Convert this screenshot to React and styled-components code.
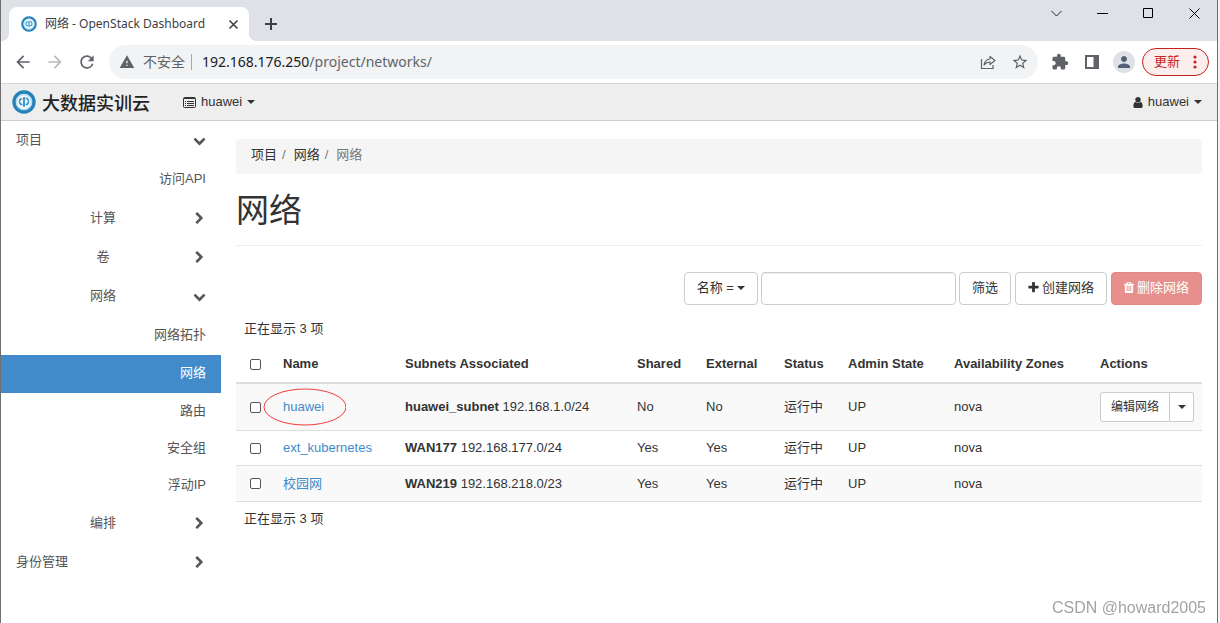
import React from 'react'
import styled, { createGlobalStyle, css } from 'styled-components';
import {
  MdArrowBack,
  MdArrowForward,
  MdRefresh,
  MdWarning,
  MdStarBorder,
  MdExtension,
  MdPerson,
} from 'react-icons/md';

const GlobalStyle = createGlobalStyle`
  *, *::before, *::after {
    box-sizing: border-box;
  }
  body {
    margin: 0;
    background: #f3f3f3;
    color: #333;
    font-family: "Liberation Sans", "Noto Sans CJK SC", sans-serif;
    font-size: 13px;
    line-height: 18px;
  }
  button, input {
    font: inherit;
    color: inherit;
  }
  button {
    cursor: pointer;
  }
  a {
    text-decoration: none;
    color: inherit;
  }
  ul, ol {
    list-style: none;
    margin: 0;
    padding: 0;
  }
  svg {
    display: block;
    flex: none;
  }
`

const Window = styled.div`
  display: flex;
  flex-direction: column;
  min-height: 100vh;
  margin-right: 2px;
  background: #fff;
  border-left: 1px solid #6f6f6f;
  border-right: 1px solid #6f6f6f;
`

/* browser frame */

const TabStrip = styled.div`
  display: flex;
  justify-content: space-between;
  height: 41px;
  padding-left: 8px;
  background: #dee1e6;
  color: #3c4043;
`

const TabList = styled.div`
  display: flex;
  align-items: flex-end;
`

const Tab = styled.div`
  position: relative;
  display: flex;
  align-items: center;
  width: 240px;
  height: 34px;
  padding: 0 8px 0 12px;
  background: #fff;
  border-radius: 8px 8px 0 0;
  font-family: "Noto Sans", "Noto Sans CJK SC", sans-serif;
  font-size: 12px;

  &::before,
  &::after {
    content: "";
    position: absolute;
    bottom: 0;
    width: 8px;
    height: 8px;
  }
  &::before {
    right: 100%;
    background: radial-gradient(circle at 0 0, transparent 8px, #fff 8px);
  }
  &::after {
    left: 100%;
    background: radial-gradient(circle at 100% 0, transparent 8px, #fff 8px);
  }
`

const TabTitle = styled.span`
  flex: 1;
  margin-left: 8px;
  white-space: nowrap;
`

const IconButton = styled.button`
  display: flex;
  align-items: center;
  justify-content: center;
  width: ${props => props.$width || 32}px;
  height: ${props => props.$height || 32}px;
  padding: 0;
  border: 0;
  background: transparent;
  color: ${props => props.$color || '#5f6368'};
`

const WindowButtons = styled.div`
  display: flex;
`

const Toolbar = styled.div`
  display: flex;
  align-items: center;
  height: 43px;
  padding: 0 8px 0 6px;
  border-bottom: 1px solid #d5d7da;
  background: #fff;
`

const Omnibox = styled.div`
  display: flex;
  align-items: center;
  flex: 1;
  height: 34px;
  margin: 0 6px 0 6px;
  padding: 0 2px 0 10px;
  border-radius: 17px;
  background: #f1f3f4;
  color: #5f6368;
  font-family: "Noto Sans", "Noto Sans CJK SC", sans-serif;
  font-size: 14px;
`

const Insecure = styled.span`
  margin-left: 8px;
  padding-right: 6px;
  border-right: 1px solid #a5a8ac;
  line-height: 16px;
`

const Address = styled.span`
  flex: 1;
  margin-left: 10px;

  b {
    font-weight: normal;
    color: #202124;
  }
`

const Avatar = styled.button`
  display: flex;
  align-items: center;
  justify-content: center;
  width: 22px;
  height: 22px;
  margin: 0 7px 0 5px;
  padding: 0;
  border: 0;
  border-radius: 50%;
  background: #dee1e6;
  color: #54607a;
`

const UpdateButton = styled.button`
  display: flex;
  align-items: center;
  justify-content: space-between;
  width: 67px;
  height: 28px;
  padding: 0 11px;
  border: 1px solid #c5221f;
  border-radius: 14px;
  background: #fbeeed;
  color: #c5221f;
  font-size: 13px;
`

/* dashboard */

const Navbar = styled.header`
  display: flex;
  align-items: center;
  height: 37px;
  padding: 0 15px 0 11px;
  border-bottom: 1px solid #ccc;
  background: #eee;
`

const Brand = styled.a`
  display: flex;
  align-items: center;
  gap: 6px;
  width: 171px;
  color: #222;
  font-family: "Noto Sans CJK SC", sans-serif;
  font-size: 18px;
  font-weight: 500;
`

const NavMenu = styled.button`
  display: flex;
  align-items: center;
  gap: 5px;
  padding: 0;
  border: 0;
  background: transparent;
  margin-left: ${props => (props.$end ? 'auto' : '0')};
`

const Caret = styled.span`
  border: 4px solid transparent;
  border-top-color: currentColor;
  border-bottom: 0;
`

const Body = styled.div`
  display: flex;
  flex: 1;
`

const Sidebar = styled.nav`
  flex: none;
  width: 220px;
  color: #555;
`

const itemBase = css`
  display: flex;
  align-items: center;
  padding: 0 15px;
`

const GroupButton = styled.button`
  ${itemBase}
  justify-content: ${props => (props.$nested ? 'flex-end' : 'space-between')};
  width: 100%;
  height: 39px;
  border: 0;
  background: transparent;

  svg {
    margin-left: ${props => (props.$nested ? '77px' : '0')};
  }
`

const GroupLabel = styled.span`
  min-width: 26px;
  padding-bottom: 2px;
  text-align: center;
`

const PanelLink = styled.a`
  ${itemBase}
  justify-content: flex-end;
  height: 37px;
  padding-bottom: 2px;

  li:first-child > & {
    height: 39px;
  }

  &[aria-current] {
    height: 38px;
    background: #428bca;
    color: #fff;
  }
`

const Content = styled.main`
  flex: 1;
  min-width: 0;
  padding: 18px 15px;
`

const Breadcrumb = styled.ol`
  display: flex;
  height: 35px;
  padding: 7px 15px;
  border-radius: 4px;
  background: #f5f5f5;
  line-height: 17px;

  li + li::before {
    content: "/";
    padding: 0 8px 0 5px;
    color: #777;
  }
  li:last-child {
    color: #777;
  }
`

const Title = styled.h1`
  margin: 17px 0 26px;
  padding-bottom: 14px;
  border-bottom: 1px solid #eee;
  font-size: 33px;
  font-weight: normal;
  line-height: 40px;
`

const Actions = styled.div`
  display: flex;
  justify-content: flex-end;
  gap: 4px;
  margin-bottom: 7px;
`

const FilterForm = styled.form`
  display: flex;
  gap: 3px;
`

const Button = styled.button`
  display: flex;
  align-items: center;
  justify-content: center;
  gap: 3px;
  height: 33px;
  padding: 0 12px 2px;
  border: 1px solid #ccc;
  border-radius: 4px;
  background: #fff;
  white-space: nowrap;

  ${props => props.$danger && css`
    border-color: #e48886;
    background: #e78f8c;
    color: #fff;
  `}
`

const SearchInput = styled.input`
  width: 195px;
  height: 33px;
  padding: 6px 12px;
  border: 1px solid #ccc;
  border-radius: 4px;
  background: #fff;
  box-shadow: inset 0 1px 1px rgba(0, 0, 0, 0.075);
`

const Count = styled.div`
  padding: 8px;
`

const Table = styled.table`
  width: 100%;
  border-collapse: collapse;
  table-layout: fixed;

  th,
  td {
    padding: 8px;
    text-align: left;
    vertical-align: middle;
    white-space: nowrap;
  }
  th {
    height: 37px;
    border-bottom: 2px solid #ddd;
  }
  td {
    height: 35px;
    border-bottom: 1px solid #ddd;
  }
  tbody tr:last-child td {
    height: 36px;
  }
  tbody tr:nth-child(odd) {
    background: #f9f9f9;
  }
  th:first-child,
  td:first-child {
    padding-left: 14px;
  }
`

const Checkbox = styled.input`
  appearance: none;
  display: block;
  width: 11px;
  height: 11px;
  margin: 0;
  border: 1px solid #555;
  border-radius: 2px;
  background: #fff;
`

const NameLink = styled.a`
  position: relative;
  color: #428bca;
`

const Ring = styled.svg`
  position: absolute;
  top: 50%;
  left: 50%;
  transform: translate(-50%, -50%);
  pointer-events: none;
`

const ButtonGroup = styled.div`
  display: flex;
  width: 94px;
`

const SmallButton = styled.button`
  display: flex;
  align-items: center;
  justify-content: center;
  height: 30px;
  padding: 0 10px;
  border: 1px solid #ccc;
  border-radius: 3px 0 0 3px;
  background: #fff;
  font-size: 12px;
  white-space: nowrap;

  & + & {
    flex: 1;
    padding: 0;
    border-left: 0;
    border-radius: 0 3px 3px 0;
  }
`

const Watermark = styled.div`
  position: fixed;
  right: 14px;
  bottom: 6px;
  color: #a3a3a3;
  font-size: 16px;
`

/* icons: x offset, glyph width and outline on a 1792 high grid */

const GLYPHS = {
  down: [0, 1792, 'M1683 808l-742 741q-19 19-45 19t-45-19l-742-741q-19-19-19-45.5t19-45.5l166-165q19-19 45-19t45 19l531 531 531-531q19-19 45-19t45 19l166 165q19 19 19 45.5t-19 45.5z'],
  right: [0, 1792, 'M1363 877l-742 742q-19 19-45 19t-45-19l-166-166q-19-19-19-45t19-45l531-531-531-531q-19-19-19-45t19-45l166-166q19-19 45-19t45 19l742 742q19 19 19 45t-19 45z'],
  plus: [150, 1492, 'M1600 736v192q0 40-28 68t-68 28h-416v416q0 40-28 68t-68 28h-192q-40 0-68-28t-28-68v-416h-416q-40 0-68-28t-28-68v-192q0-40 28-68t68-28h416v-416q0-40 28-68t68-28h192q40 0 68 28t28 68v416h416q40 0 68 28t28 68z'],
  user: [206, 1380, 'M1536 1399q0 109-62.5 187t-150.5 78h-854q-88 0-150.5-78t-62.5-187q0-85 8.5-160.5t31.5-152 58.5-131 94-89 134.5-34.5q131 128 313 128t313-128q76 0 134.5 34.5t94 89 58.5 131 31.5 152 8.5 160.5zm-256-887q0 159-112.5 271.5t-271.5 112.5-271.5-112.5-112.5-271.5 112.5-271.5 271.5-112.5 271.5 112.5 112.5 271.5z'],
  trash: [206, 1380, 'M704 1376v-704q0-14-9-23t-23-9h-64q-14 0-23 9t-9 23v704q0 14 9 23t23 9h64q14 0 23-9t9-23zm256 0v-704q0-14-9-23t-23-9h-64q-14 0-23 9t-9 23v704q0 14 9 23t23 9h64q14 0 23-9t9-23zm256 0v-704q0-14-9-23t-23-9h-64q-14 0-23 9t-9 23v704q0 14 9 23t23 9h64q14 0 23-9t9-23zm-544-992h448l-48-117q-7-9-17-11h-317q-10 2-17 11zm928 32v64q0 14-9 23t-23 9h-96v948q0 83-47 143.5t-113 60.5h-832q-66 0-113-58.5t-47-141.5v-952h-96q-14 0-23-9t-9-23v-64q0-14 9-23t23-9h309l70-167q15-37 54-63t79-26h320q40 0 79 26t54 63l70 167h309q14 0 23 9t9 23z'],
}

function Icon({ name, size = 13 }) {
  const [x, w, d] = GLYPHS[name]
  return (
    <svg width={Math.round(size * w / 1792)} height={size} viewBox={`${x} 0 ${w} 1792`} fill="currentColor" overflow="visible" aria-hidden="true">
      <path d={d} />
    </svg>
  )
}

function ListIcon() {
  return (
    <svg width="13" height="11" viewBox="0 0 13 11" fill="none" stroke="currentColor" aria-hidden="true">
      <rect x="0.5" y="0.5" width="12" height="10" rx="1" />
      <path d="M1 1.5h11" />
      <path d="M2 4.5h1M4 4.5h7M2 6.5h1M4 6.5h7M2 8.5h1M4 8.5h7" />
    </svg>
  )
}

function Logo({ size }) {
  return (
    <svg width={size} height={size} viewBox="0 0 24 24" fill="none" aria-hidden="true">
      <circle cx="12" cy="12" r="10" fill="#fff" stroke="#2583bb" strokeWidth="3.400" />
      <circle cx="12" cy="12" r="7.500" stroke="#b5daee" strokeWidth="1.400" />
      <path d="M9 8.500q-1.500 1-1.500 3t1.500 3h1.500M13.500 8.500h1.500q1.500 1 1.500 3t-1.500 3h-1.500" stroke="#3b9fd2" strokeWidth="1.800" />
      <path d="M12 7v10" stroke="#2b8fc8" strokeWidth="1.800" />
      <path d="M9 8.500l1.500 1" stroke="#e0525a" strokeWidth="1.200" />
    </svg>
  )
}

function Line({ d, size = 11, width = 1, children }) {
  return (
    <svg width={size} height={size} viewBox={`0 0 ${size} ${size}`} fill="none" stroke="currentColor" strokeWidth={width} aria-hidden="true">
      <path d={d} />
      {children}
    </svg>
  )
}

function BrowserFrame() {
  return (
    <>
      <TabStrip>
        <TabList>
          <Tab>
            <Logo size={16} />
            <TabTitle>网络 - OpenStack Dashboard</TabTitle>
            <IconButton $width={16} $height={16} $color="#3c4043" aria-label="关闭标签页">
              <Line d="M1.500 1.500l8 8M9.500 1.500l-8 8" width={1.600} />
            </IconButton>
          </Tab>
          <IconButton $width={44} $height={34} $color="#3c4043" aria-label="新标签页">
            <Line size={12} d="M6 0v12M0 6h12" width={2} />
          </IconButton>
        </TabList>
        <WindowButtons>
          <IconButton $width={46} $height={27} $color="#222" aria-label="搜索标签页">
            <Line d="M0.500 3l5 5 5-5" />
          </IconButton>
          <IconButton $width={46} $height={27} $color="#000" aria-label="最小化">
            <Line d="M0 5.500h11" />
          </IconButton>
          <IconButton $width={46} $height={27} $color="#000" aria-label="最大化">
            <Line d="M0.500 0.500h9v9h-9z" />
          </IconButton>
          <IconButton $width={46} $height={27} $color="#000" aria-label="关闭">
            <Line d="M0.500 0.500l10 10M10.500 0.500l-10 10" />
          </IconButton>
        </WindowButtons>
      </TabStrip>
      <Toolbar>
        <IconButton aria-label="后退"><MdArrowBack size={20} /></IconButton>
        <IconButton $color="#babcbe" aria-label="前进"><MdArrowForward size={20} /></IconButton>
        <IconButton aria-label="重新加载"><MdRefresh size={20} /></IconButton>
        <Omnibox>
          <MdWarning size={16} />
          <Insecure>不安全</Insecure>
          <Address><b>192.168.176.250</b>/project/networks/</Address>
          <IconButton aria-label="分享">
            <Line size={16} d="M1.500 5v9.500h11.500v-3.500" width={1.200}>
              <path d="M10 2.500v2.500q-5 .5-6 6 2.500-3 6-3v2.500l5-4z" strokeLinejoin="round" />
            </Line>
          </IconButton>
          <IconButton aria-label="收藏"><MdStarBorder size={18} /></IconButton>
        </Omnibox>
        <IconButton aria-label="扩展程序"><MdExtension size={18} /></IconButton>
        <IconButton aria-label="侧边栏">
          <svg width="14" height="14" viewBox="0 0 14 14" aria-hidden="true">
            <path fill="currentColor" fillRule="evenodd" d="M0 0h14v14h-14zM2 2v10h6.500v-10z" />
          </svg>
        </IconButton>
        <Avatar aria-label="用户"><MdPerson size={18} /></Avatar>
        <UpdateButton>
          更新
          <svg width="4" height="14" viewBox="0 0 4 14" fill="currentColor" aria-hidden="true">
            <circle cx="2" cy="2" r="1.600" />
            <circle cx="2" cy="7" r="1.600" />
            <circle cx="2" cy="12" r="1.600" />
          </svg>
        </UpdateButton>
      </Toolbar>
    </>
  )
}

function Group({ label, open, nested, children }) {
  return (
    <li>
      <GroupButton $nested={nested} aria-expanded={!!open}>
        <GroupLabel>{label}</GroupLabel>
        <Icon name={open ? 'down' : 'right'} />
      </GroupButton>
      {children && <ul>{children}</ul>}
    </li>
  )
}

function Panel({ label, active }) {
  return (
    <li>
      <PanelLink href="#" aria-current={active ? 'page' : undefined}>{label}</PanelLink>
    </li>
  )
}

const networks = [
  { name: 'huawei', subnet: 'huawei_subnet', cidr: '192.168.1.0/24', shared: 'No', external: 'No', ringed: true, editable: true },
  { name: 'ext_kubernetes', subnet: 'WAN177', cidr: '192.168.177.0/24', shared: 'Yes', external: 'Yes' },
  { name: '校园网', subnet: 'WAN219', cidr: '192.168.218.0/23', shared: 'Yes', external: 'Yes' },
]

const columns = ['Name', 'Subnets Associated', 'Shared', 'External', 'Status', 'Admin State', 'Availability Zones', 'Actions']
const widths = [39, 122, null, 69, 78, 64, 106, 146, 110]

function NetworkTable() {
  return (
    <Table>
      <colgroup>
        {widths.map((w, i) => <col key={i} width={w || undefined} />)}
      </colgroup>
      <thead>
        <tr>
          <th><Checkbox type="checkbox" aria-label="全选" /></th>
          {columns.map(c => <th key={c}>{c}</th>)}
        </tr>
      </thead>
      <tbody>
        {networks.map(n => (
          <tr key={n.name}>
            <td><Checkbox type="checkbox" aria-label={n.name} /></td>
            <td>
              <NameLink href="#">
                {n.name}
                {n.ringed && (
                  <Ring width="84" height="38" viewBox="0 0 84 38" fill="none" stroke="#f03c3c" aria-hidden="true">
                    <ellipse cx="43" cy="19" rx="41" ry="18" />
                  </Ring>
                )}
              </NameLink>
            </td>
            <td><b>{n.subnet}</b> {n.cidr}</td>
            <td>{n.shared}</td>
            <td>{n.external}</td>
            <td>运行中</td>
            <td>UP</td>
            <td>nova</td>
            <td>
              {n.editable && (
                <ButtonGroup>
                  <SmallButton>编辑网络</SmallButton>
                  <SmallButton aria-label="更多操作"><Caret /></SmallButton>
                </ButtonGroup>
              )}
            </td>
          </tr>
        ))}
      </tbody>
    </Table>
  )
}

export default function App() {
  return (
    <Window>
      <GlobalStyle />
      <BrowserFrame />
      <Navbar>
        <Brand href="#">
          <Logo size={24} />
          大数据实训云
        </Brand>
        <NavMenu>
          <ListIcon />
          huawei
          <Caret />
        </NavMenu>
        <NavMenu $end>
          <Icon name="user" />
          huawei
          <Caret />
        </NavMenu>
      </Navbar>
      <Body>
        <Sidebar>
          <ul>
            <Group label="项目" open>
              <Panel label="访问API" />
              <Group label="计算" nested />
              <Group label="卷" nested />
              <Group label="网络" nested open>
                <Panel label="网络拓扑" />
                <Panel label="网络" active />
                <Panel label="路由" />
                <Panel label="安全组" />
                <Panel label="浮动IP" />
              </Group>
              <Group label="编排" nested />
            </Group>
            <Group label="身份管理" />
          </ul>
        </Sidebar>
        <Content>
          <Breadcrumb>
            <li><a href="#">项目</a></li>
            <li><a href="#">网络</a></li>
            <li>网络</li>
          </Breadcrumb>
          <Title>网络</Title>
          <Actions>
            <FilterForm onSubmit={e => e.preventDefault()}>
              <Button type="button" aria-haspopup="menu">名称 = <Caret /></Button>
              <SearchInput type="text" aria-label="筛选" />
              <Button type="submit">筛选</Button>
            </FilterForm>
            <Button><Icon name="plus" /> 创建网络</Button>
            <Button $danger><Icon name="trash" /> 删除网络</Button>
          </Actions>
          <Count>正在显示 3 项</Count>
          <NetworkTable />
          <Count>正在显示 3 项</Count>
        </Content>
      </Body>
      <Watermark>CSDN @howard2005</Watermark>
    </Window>
  )
}
